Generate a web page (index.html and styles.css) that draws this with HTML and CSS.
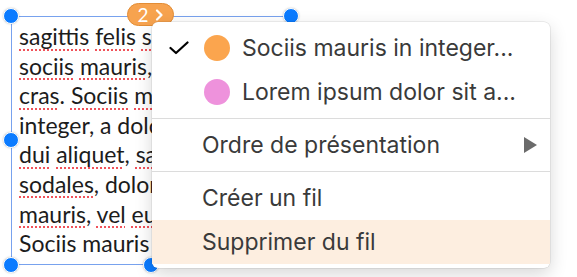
FILE: index.html
```html
<!DOCTYPE html>
<html lang="fr">
<head>
  <meta charset="UTF-8">
  <meta name="viewport" content="width=device-width, initial-scale=1.0">
  <title>Fil de texte</title>
  <link rel="stylesheet" href="styles.css">
</head>
<body>
  <div class="frame">
    <div class="text">
      <span class="typo">sagittis</span> <span class="typo">felis</span> <span class="typo">sociis</span> dolor<br>
      <span class="typo">sociis</span> <span class="typo">mauris</span>, vel eu<br>
      <span class="typo">cras</span>. <span class="typo">Sociis</span> <span class="typo">mauris</span> in<br>
      integer, a dolor sit<br>
      <span class="typo">dui</span> <span class="typo">aliquet</span>, <span class="typo">sagittis</span><br>
      <span class="typo">sodales</span>, dolor sit<br>
      <span class="typo">mauris</span>, <span class="typo">vel</span> <span class="typo">eu</span> sociis<br>
      Sociis mauris in
    </div>
    <span class="handle tl"></span>
    <span class="handle ml"></span>
    <span class="handle bl"></span>
    <span class="handle bm"></span>
    <span class="handle tr"></span>
    <span class="badge">
      <span class="num">2</span>
      <svg width="9" height="12" viewBox="0 0 9 12"><polyline points="2,1.5 6.5,6 2,10.5" fill="none" stroke="#fff" stroke-width="2.2" stroke-linecap="round" stroke-linejoin="round"/></svg>
    </span>
  </div>

  <div class="menu">
    <div class="item">
      <span class="check">
        <svg width="20" height="14" viewBox="0 0 20 14"><polyline points="1.5,7 7,12 18.5,1.5" fill="none" stroke="#000" stroke-width="2.2" stroke-linecap="round" stroke-linejoin="round"/></svg>
      </span>
      <span class="dot orange"></span>
      <span class="label">Sociis mauris in integer...</span>
    </div>
    <div class="item">
      <span class="check"></span>
      <span class="dot pink"></span>
      <span class="label">Lorem ipsum dolor sit a...</span>
    </div>
    <div class="sep"></div>
    <div class="item plain">
      <span class="label">Ordre de présentation</span>
      <span class="arrow"></span>
    </div>
    <div class="sep"></div>
    <div class="item plain">
      <span class="label">Créer un fil</span>
    </div>
    <div class="item plain active">
      <span class="label">Supprimer du fil</span>
    </div>
  </div>
</body>
</html>
```

FILE: styles.css
```css
body {
  margin: 0;
  background-color: white;
  font-family: Lato, 'Noto Sans', sans-serif;
  width: 577px;
  height: 277px;
  overflow: hidden;
  position: relative;
}
.frame {
  position: relative;
  margin: 16px 0 0 11px;
  width: 280px;
  height: 249px;
  border: 1px solid #78a2ee;
  box-sizing: border-box;
}
/* the rest of the text sits under the menu, so clip it at the menu edge */
.text {
  width: 140px;
  height: 100%;
  overflow: hidden;
  padding: 5px 0 0 7px;
  box-sizing: border-box;
  font-size: 23px;
  line-height: 29.6px;
  color: #1c1c1c;
  white-space: nowrap;
}
.typo {
  text-decoration: underline dotted #f0525a;
  text-decoration-thickness: 2px;
  text-underline-offset: 4px;
}
.handle {
  position: absolute;
  width: 14px;
  height: 14px;
  border-radius: 50%;
  background-color: #0b7bff;
  border: 1.5px solid white;
  box-shadow: 0 0 2px rgba(0,0,0,0.25);
  transform: translate(-50%, -50%);
}
.tl { left: -1px; top: -1px; }
.ml { left: -1px; top: 123px; }
.bl { left: -1px; top: 248px; }
.bm { left: 139px; top: 248px; }
.tr { left: 279px; top: -1px; }
.badge {
  position: absolute;
  left: 115px;
  top: -14px;
  width: 47px;
  height: 23px;
  border-radius: 12px;
  background-color: #f7a34f;
  border: 1px solid #e38d35;
  box-sizing: border-box;
  display: flex;
  align-items: center;
  justify-content: center;
  gap: 6px;
  color: white;
}
.num {
  font-family: Lato, sans-serif;
  font-size: 19px;
  line-height: 20px;
}
.menu {
  position: absolute;
  left: 152px;
  top: 22px;
  width: 398px;
  padding: 4px 0;
  background-color: white;
  border-radius: 6px;
  box-shadow: 0 0 0 0.5px rgba(0,0,0,0.12), 0 6px 18px rgba(0,0,0,0.16);
  font-family: Inter, 'Noto Sans', sans-serif;
  font-size: 23px;
  color: #3a3a3a;
}
.item {
  display: flex;
  align-items: center;
  height: 44px;
}
.check {
  width: 52px;
  display: flex;
  justify-content: flex-end;
}
.check svg {
  margin-right: 15px;
}
.dot {
  width: 26px;
  height: 26px;
  border-radius: 50%;
  margin-right: 12px;
}
.orange { background-color: #fba54e; }
.pink { background-color: #ee92dc; }
.plain {
  padding-left: 50px;
}
.plain .label {
  flex: 1;
}
.arrow {
  width: 0;
  height: 0;
  border-top: 8px solid transparent;
  border-bottom: 8px solid transparent;
  border-left: 13px solid #6b6b6b;
  margin-right: 13px;
}
.active {
  background-color: #fdeee0;
}
.sep {
  height: 1px;
  margin: 4px 0;
  background-color: #dcdcdc;
}
```
